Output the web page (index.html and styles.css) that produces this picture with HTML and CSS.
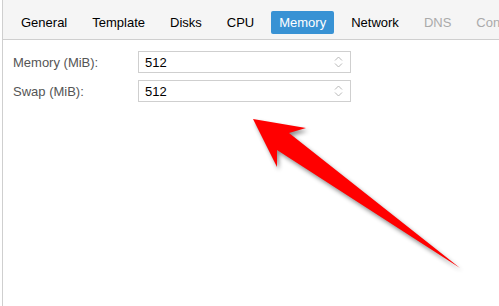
FILE: index.html
```html
<!DOCTYPE html>
<html lang="en">
<head>
  <meta charset="UTF-8" />
  <title>Memory</title>
  <link rel="stylesheet" href="styles.css">
</head>
<body>
  <div class="wizard">
    <div class="tabs">
      <span class="tab">General</span>
      <span class="tab">Template</span>
      <span class="tab">Disks</span>
      <span class="tab">CPU</span>
      <span class="tab activo">Memory</span>
      <span class="tab">Network</span>
      <span class="tab off">DNS</span>
      <span class="tab off">Confirm</span>
    </div>
    <div class="panel">
      <div class="fila">
        <label>Memory (MiB):</label>
        <div class="campo">
          <span>512</span>
          <svg class="spin" width="9" height="16" viewBox="0 0 9 16">
            <path d="M1 6.5 L4.5 3 L8 6.5 M1 9.5 L4.5 13 L8 9.5" fill="none" stroke="#b8b8b8" stroke-width="1"/>
          </svg>
        </div>
      </div>
      <div class="fila">
        <label>Swap (MiB):</label>
        <div class="campo">
          <span>512</span>
          <svg class="spin" width="9" height="16" viewBox="0 0 9 16">
            <path d="M1 6.5 L4.5 3 L8 6.5 M1 9.5 L4.5 13 L8 9.5" fill="none" stroke="#b8b8b8" stroke-width="1"/>
          </svg>
        </div>
      </div>
    </div>
  </div>

  <svg class="flecha" width="499" height="306" viewBox="0 0 499 306">
    <polygon points="253,119 306,128 289,133 460,268 277,150 277,167" fill="#ff0000"/>
  </svg>
</body>
</html>
```

FILE: styles.css
```css
body {
  margin: 0;
  background-color: #ffffff;
  font-family: 'Liberation Sans', Arial, sans-serif;
  font-size: 13px;
}

.wizard {
  border-left: 1px solid #cfcfcf;
  margin-left: 2px;
  height: 306px;
}

.tabs {
  background-color: #f5f5f5;
  height: 40px;
  box-sizing: border-box;
  padding: 11px 0 0 10px;
  display: flex;
  gap: 9px;
  white-space: nowrap;
  overflow: hidden;
  border-bottom: 1px solid #cfcfcf;
}

.tab {
  height: 23px;
  line-height: 23px;
  padding: 0 8px;
  color: #000;
  border-radius: 2px;
}

.tab.activo {
  background-color: #3892d4;
  color: #fff;
}

.tab.off {
  color: #aaaaaa;
}

.panel {
  padding: 11px 0 0 10px;
}

.fila {
  display: flex;
  align-items: center;
  margin-bottom: 7px;
}

.fila label {
  width: 125px;
  color: #555555;
}

.campo {
  width: 213px;
  height: 22px;
  box-sizing: border-box;
  border: 1px solid #cfcfcf;
  background: #fff;
  display: flex;
  align-items: center;
  justify-content: space-between;
  padding: 0 7px 0 6px;
  color: #000;
}

.flecha {
  position: absolute;
  left: 0;
  top: 0;
  filter: drop-shadow(2px 3px 2px rgba(0, 0, 0, 0.45));
}
```
